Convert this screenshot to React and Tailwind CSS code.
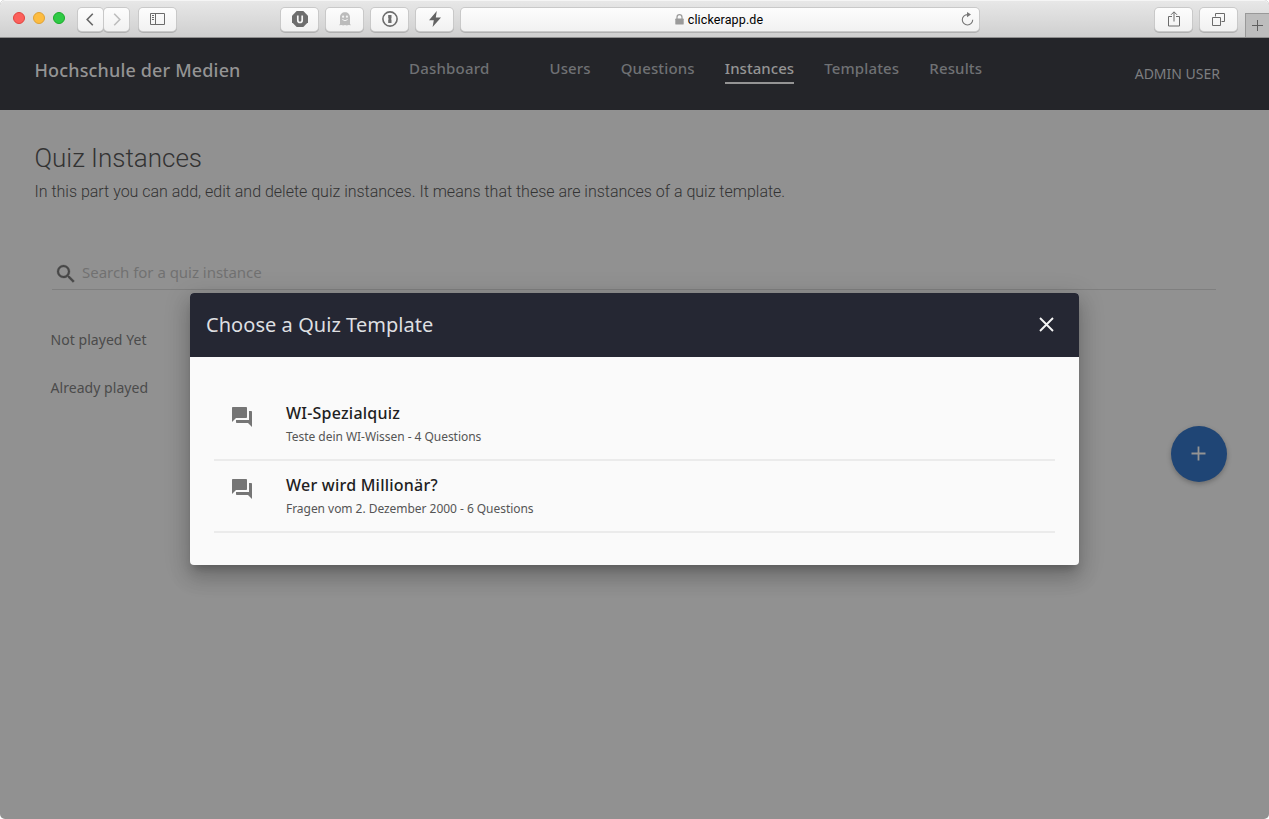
import React from "react";

const toolButton =
  "flex h-[23px] items-center justify-center rounded-[4px] bg-gradient-to-b from-[#fdfdfd] to-[#f1f1f1] shadow-[0_0_0_1px_#c9c9c9,0_1px_0_1px_#b0b0b0]";

function BrowserBar() {
  return (
    <div className="flex h-[38px] shrink-0 items-start rounded-t-[5px] border-b border-[#8e8e8e] bg-gradient-to-b from-[#e8e8e8] to-[#cfcfcf] shadow-[inset_0_1px_0_#f5f5f5]">
      <div className="ml-[13px] mt-3 flex gap-2">
        <span className="size-3 rounded-full border border-[#e0443e] bg-[#fc605c]" />
        <span className="size-3 rounded-full border border-[#dea236] bg-[#fdbc40]" />
        <span className="size-3 rounded-full border border-[#1aab29] bg-[#2fca45]" />
      </div>
      <div className="ml-[13px] mt-2 flex gap-[1px]">
        <div className={`${toolButton} w-[25px] pr-[2px]`}>
          <svg width="8" height="13" viewBox="0 0 8 13" fill="none" stroke="#666" strokeWidth="1.6"><path d="M6.8.8 1.2 6.5l5.6 5.7" /></svg>
        </div>
        <div className={`${toolButton} w-[25px]`}>
          <svg width="8" height="13" viewBox="0 0 8 13" fill="none" stroke="#bdbdbd" strokeWidth="1.6"><path d="m1.2.8 5.6 5.7-5.6 5.7" /></svg>
        </div>
      </div>
      <div className={`${toolButton} ml-[10px] mt-2 w-[37px] pb-px`}>
        <svg width="15" height="12" viewBox="0 0 15 12" fill="none" stroke="#6b6b6b"><path d="M.5.5h14v11H.5zM5.5.5v11M2 2.5h2M2 4.500h2M2 6.500h2" /></svg>
      </div>
      <div className="ml-[105px] mt-2 flex gap-2">
        <div className={`${toolButton} w-[37px] pb-px`}>
          <svg width="16" height="16" viewBox="0 0 16 16"><path d="M4.700 0h6.600L16 4.700v6.600L11.300 16H4.700L0 11.300V4.700z" fill="#6d6d6d" /><path d="M5.800 4.500v4.700c0 1.500.9 2.300 2.200 2.300s2.200-.8 2.200-2.300V4.500" fill="none" stroke="#f5f5f5" strokeWidth="1.700" /></svg>
        </div>
        <div className={`${toolButton} w-[37px] pb-px`}>
          <svg width="12" height="14" viewBox="0 0 12 14"><path d="M1 12V5.500C1 2.300 3 .3 6 .3s5 2 5 5.200V12l1 1.300-2.400-.2-1.800.5-1.800-.5-1.800.5-1.800-.5-2.400.2z" fill="#bcbcbc" /><circle cx="4.100" cy="4.700" r="1.100" fill="#f3f3f3" /><circle cx="7.900" cy="4.700" r="1.100" fill="#f3f3f3" /><path d="M3.300 7.500q2.700 2.500 5.400 0" fill="none" stroke="#f3f3f3" /></svg>
        </div>
        <div className={`${toolButton} w-[37px] pb-px`}>
          <svg width="16" height="16" viewBox="0 0 16 16"><circle cx="8" cy="8" r="7.100" fill="none" stroke="#6d6d6d" strokeWidth="1.600" /><path d="M6.200 4h3.300v3.300L9 8l.5.700V12H6.200V8.700L6.800 8l-.6-.7z" fill="#6d6d6d" /></svg>
        </div>
        <div className={`${toolButton} w-[37px] pb-px`}>
          <svg width="14" height="16" viewBox="0 0 14 16"><path d="M8.800 0 1 9.300h4.800L4.600 16 13 6.400H7.800z" fill="#636363" /></svg>
        </div>
      </div>
      <div className={`${toolButton} relative ml-2 mt-2 w-[518px] pr-[2px]`}>
        <svg className="mb-px mr-[4px]" width="9" height="11" viewBox="0 0 9 11"><path d="M2 5V3.200C2 1.500 3 .6 4.500.6S7 1.500 7 3.200V5" fill="none" stroke="#9a9a9a" strokeWidth="1.200" /><rect x=".3" y="4.600" width="8.400" height="6" rx=".7" fill="#9a9a9a" /></svg>
        <span className="font-['Roboto','Liberation_Sans',sans-serif] text-[12.500px] leading-[23px] tracking-[0.130px] text-black">clickerapp.de</span>
        <svg className="absolute right-[5px] top-1" width="13" height="14" viewBox="0 0 13 14"><path d="M11.700 7.800A5.200 5.200 0 1 1 6.500 2.600" fill="none" stroke="#777" strokeWidth="1.100" /><path d="M6 0v5.200l4-2.600z" fill="#777" /></svg>
      </div>
      <div className="ml-[176px] mt-2 flex gap-2">
        <div className={`${toolButton} w-[37px] pb-[2px]`}>
          <svg width="12" height="16" viewBox="0 0 12 16" fill="none" stroke="#6b6b6b"><path d="M4 5.500H.5v9.500h11V5.500H8M6 10.500V1M3 3.800 6 .8l3 3" /></svg>
        </div>
        <div className={`${toolButton} w-[37px]`}>
          <svg width="13" height="13" viewBox="0 0 13 13" fill="none" stroke="#6b6b6b"><path d="M.5 4.500h8v8h-8zM3.500 3.500v-3h9v8h-3" /></svg>
        </div>
      </div>
      <div className="ml-[8px] mt-[13px] flex h-6 w-[24px] items-center justify-center border-l border-t border-[#999] bg-[#bdbdbd]">
        <svg width="11" height="11" viewBox="0 0 11 11" stroke="#5f5f5f"><path d="M5.500 0v11M0 5.500h11" /></svg>
      </div>
    </div>
  );
}

function Header() {
  return (
    <header className="flex h-[72px] shrink-0 bg-[#242529]">
      <div className="w-[409px] pl-[34.500px] pt-[20px] text-[18px] font-medium leading-6 tracking-[0.150px] text-[#949494]">Hochschule der Medien</div>
      <nav className="flex gap-[30px] pt-[19px] text-[15px] font-medium leading-[22px] text-[#6f7174]">
        <span className="mr-[30px] tracking-[0.200px]">Dashboard</span>
        <span className="tracking-[0.130px]">Users</span>
        <span className="tracking-[0.150px]">Questions</span>
        <span className="h-[27px] border-b-2 border-[#949494] tracking-[0.040px] text-[#949494]">Instances</span>
        <span className="tracking-[0.150px]">Templates</span>
        <span className="tracking-[0.150px]">Results</span>
      </nav>
      <div className="ml-auto mr-[49px] pt-[25px] text-[14px] leading-[22px] text-[#7d7e80]">ADMIN USER</div>
    </header>
  );
}

function QuizRow({ title, detail }) {
  return (
    <li className="flex h-[72px] border-b-2 border-[#ebebeb] pl-4">
      <svg className="mt-[16px] shrink-0" width="24" height="24" viewBox="0 0 24 24" fill="#757575"><path d="M21 6h-2v9H6v2c0 .55.45 1 1 1h11l4 4V7c0-.55-.45-1-1-1zm-4 6V3c0-.55-.45-1-1-1H3c-.55 0-1 .45-1 1v14l4-4h10c.55 0 1-.45 1-1z" /></svg>
      <div className="ml-8 pt-[12px]">
        <div className="text-[16px] font-medium leading-[24px] tracking-[0.230px] text-[#212121]">{title}</div>
        <div className="text-[12px] leading-[23px] tracking-[-0.040px] text-[#555]">{detail}</div>
      </div>
    </li>
  );
}

function Dialog() {
  return (
    <section className="absolute left-[190px] top-[293px] flex h-[272px] w-[889px] flex-col overflow-hidden rounded-[4px] bg-[#fafafa] shadow-[0_7px_8px_-4px_rgba(0,0,0,0.2),0_13px_19px_2px_rgba(0,0,0,0.14),0_5px_24px_4px_rgba(0,0,0,0.12)]">
      <div className="flex h-16 shrink-0 items-center justify-between bg-[#252733] pl-4 pr-[25px]">
        <h2 className="text-[20px] leading-8 tracking-[0.050px] text-[#dedfe1]">Choose a Quiz Template</h2>
        <svg className="mb-px" width="15" height="15" viewBox="0 0 15 15" stroke="#f5f5f5" strokeWidth="1.900"><path d="m1 1 13 13M14 1 1 14" /></svg>
      </div>
      <ul className="px-6 pt-8">
        <QuizRow title="WI-Spezialquiz" detail="Teste dein WI-Wissen - 4 Questions" />
        <QuizRow title="Wer wird Millionär?" detail="Fragen vom 2. Dezember 2000 - 6 Questions" />
      </ul>
    </section>
  );
}

export default function App() {
  return (
    <div className="h-[819px] w-[1269px] overflow-hidden bg-white">
      <div className="relative flex h-full flex-col overflow-hidden rounded-[5px] bg-[#919191] font-['Noto_Sans','Open_Sans',sans-serif]">
        <BrowserBar />
        <Header />
        <main className="flex-1">
          <div className="pl-[34.500px] pt-[32px] font-['Roboto',sans-serif] font-light text-[#333]">
            <h1 className="text-[26px] leading-8 tracking-[-0.020px]">Quiz Instances</h1>
            <p className="mt-[7px] text-[16px] leading-[22px] tracking-[-0.010px]">In this part you can add, edit and delete quiz instances. It means that these are instances of a quiz template.</p>
          </div>
          <div className="ml-[52px] mt-[57px] flex h-[30px] w-[1164px] items-start border-b border-[#7f7f7f]">
            <svg className="ml-[2px] mt-[2px]" width="24" height="24" viewBox="0 0 24 24" fill="#484848" stroke="#484848" strokeWidth=".3"><path d="M15.500 14h-.79l-.28-.27A6.471 6.471 0 0 0 16 9.500 6.500 6.500 0 1 0 9.500 16c1.610 0 3.090-.59 4.230-1.570l.27.28v.79l5 4.990L20.490 19l-4.990-5zm-6 0C7.010 14 5 11.990 5 9.500S7.010 5 9.500 5 14 7.010 14 9.500 11.990 14 9.500 14z" /></svg>
            <span className="ml-[4px] text-[15px] leading-[24px] tracking-[-0.030px] text-[#717171]">Search for a quiz instance</span>
          </div>
          <div className="flex flex-col gap-[26px] pl-[50.500px] pt-[39px] text-[14px] leading-[22px] tracking-[0.050px] text-[#4b4b4b]">
            <span>Not played Yet</span>
            <span>Already played</span>
          </div>
        </main>
        <Dialog />
        <button className="absolute left-[1171px] top-[426px] flex size-14 items-center justify-center rounded-full bg-[#1f4575] shadow-[0_2px_5px_rgba(0,0,0,0.26)]">
          <svg className="mb-px mr-px" width="15" height="15" viewBox="0 0 15 15" stroke="#949494" strokeWidth="1.800"><path d="M7.500 .5v14M.5 7.500h14" /></svg>
        </button>
      </div>
    </div>
  );
}
